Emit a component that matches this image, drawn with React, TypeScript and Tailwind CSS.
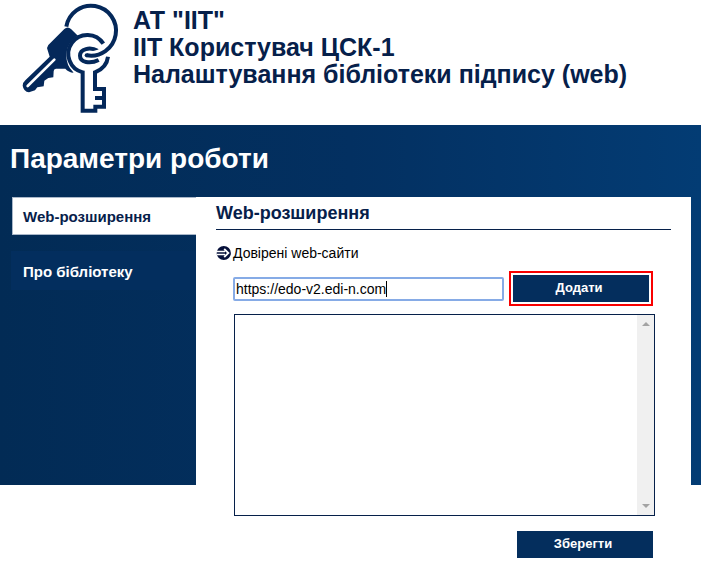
import React from "react";

function KeysLogo() {
  return (
    <svg className="h-[120px] w-[130px] shrink-0" viewBox="0 0 390 360" fill="none">
      <path
        d="M163 87 Q173 78 183 87 L205 109 L196 190 L190 218 Q176 217 166 206 L138 206 Q131 207 131 214 L130 232 L115 234 L103 242 L101 259 L82 262 L75 271 L57 277 Q41 275 38 257 Q38 248 46 241 L119 170 L113 151 Q109 143 115 135 Z"
        fill="#04285a"
      />
      <path d="M53 258 L133 179" stroke="#fff" strokeWidth="8" strokeLinecap="round" />
      <circle cx="238" cy="167" r="60" fill="#fff" stroke="#fff" strokeWidth="18" />
      <path
        d="M280 131 A57 57 0 1 0 218 217 V332 H256 V320 H282 V267 H255 V217 Q290 203 294 170"
        stroke="#04285a"
        strokeWidth="12"
      />
      <path d="M255 294 H282" stroke="#04285a" strokeWidth="12" />
      <path d="M264 153 C240 139 210 147 210 167 C210 187 240 193 266 180" stroke="#04285a" strokeWidth="12" />
      <path d="M314 119 Q284 165 230 166" stroke="#fff" strokeWidth="22" />
      <path d="M169 80 A75 75 0 1 1 230 166" stroke="#04285a" strokeWidth="12" />
      <circle cx="230" cy="166" r="6" fill="#04285a" />
    </svg>
  );
}

function ArrowIcon() {
  return (
    <svg className="mr-[2px] h-[14px] w-[15px]" viewBox="0 0 15 14" fill="none">
      <ellipse cx="7.8" cy="7" rx="7.1" ry="7" fill="#06103a" />
      <path d="M1 5.5H9M1 8.5H9" stroke="#fff" strokeWidth="1.3" />
      <path d="M8.2 3L12.4 7L8.2 11" stroke="#fff" strokeWidth="1.8" />
    </svg>
  );
}

function ScrollArrow({ down = false }: { down?: boolean }) {
  return (
    <svg className="h-[4px] w-[8px]" viewBox="0 0 8 4">
      <path d={down ? "M0 0H8L4 4Z" : "M0 4H8L4 0Z"} fill="#a3a3a3" />
    </svg>
  );
}

export default function App() {
  return (
    <div className="h-[565px] w-[701px] overflow-hidden bg-white font-['Liberation_Sans',Arial,sans-serif] text-[#06204a]">
      <header className="flex h-[125px] pl-[10px]">
        <KeysLogo />
        <h1 className="-ml-[7px] pt-[7px] text-[25px] leading-[27px] font-bold whitespace-nowrap">
          <span className="block">АТ "ІІТ"</span>
          <span className="block">ІІТ Користувач ЦСК-1</span>
          <span className="block">Налаштування бібліотеки підпису (web)</span>
        </h1>
      </header>

      <main className="h-[360px] bg-linear-to-r from-[#022b55] via-[#033061] to-[#033c74]">
        <div className="h-[72px] pt-[18px] pl-[10px]">
          <h2 className="text-[28px] leading-[32px] font-bold text-white">Параметри роботи</h2>
        </div>
        <div className="flex items-start">
          <nav className="w-[196px] text-[15px] leading-[17px] font-bold">
            <div className="ml-[12px] flex h-[38px] items-center border border-r-0 border-[#a9b7c9] bg-white pl-[10px]">
              Web-розширення
            </div>
            <div className="mt-[16px] ml-[11px] flex h-[39px] items-center bg-[#032e5e] pt-[2px] pl-[12px] text-white">
              Про бібліотеку
            </div>
          </nav>
          <section className="h-[368px] w-[495px] bg-white">
            <h3 className="mr-[20px] ml-[20px] h-[33px] border-b border-[#06204a] pt-[6px] text-[18px] leading-[21px] font-bold">
              Web-розширення
            </h3>
            <div className="mt-[15px] ml-[20px] flex h-[16px] items-center text-[14px] leading-[16px] text-black">
              <ArrowIcon />
              <span>Довірені web-сайти</span>
            </div>
            <div className="mt-[10px] ml-[37px] flex">
              <div className="mt-[6px] flex h-[24px] w-[271px] items-center rounded-[2px] border-2 border-[#86abe6] pl-px text-[14px] leading-[16px] text-black">
                <span>https://edo-v2.edi-n.com</span>
                <span className="h-[16px] w-px bg-black" />
              </div>
              <div className="ml-[5px] h-[35px] w-[144px] border-2 border-[#f90000] p-[2px]">
                <button className="block h-[27px] w-full bg-[#042e5d] pr-[4px] pb-[2px] text-[13px] font-bold text-white">Додати</button>
              </div>
            </div>
            <div className="mt-[8px] ml-[38px] flex h-[202px] w-[421px] justify-end border border-[#06204a]">
              <div className="flex w-[17px] flex-col items-center justify-between bg-[#f0f0f0] pt-[7px] pb-[7px]">
                <ScrollArrow />
                <ScrollArrow down />
              </div>
            </div>
            <button className="mt-[15px] ml-[321px] block h-[27px] w-[136px] bg-[#042e5d] pr-[4px] pb-[2px] text-[13px] font-bold text-white">
              Зберегти
            </button>
          </section>
        </div>
      </main>
    </div>
  );
}
